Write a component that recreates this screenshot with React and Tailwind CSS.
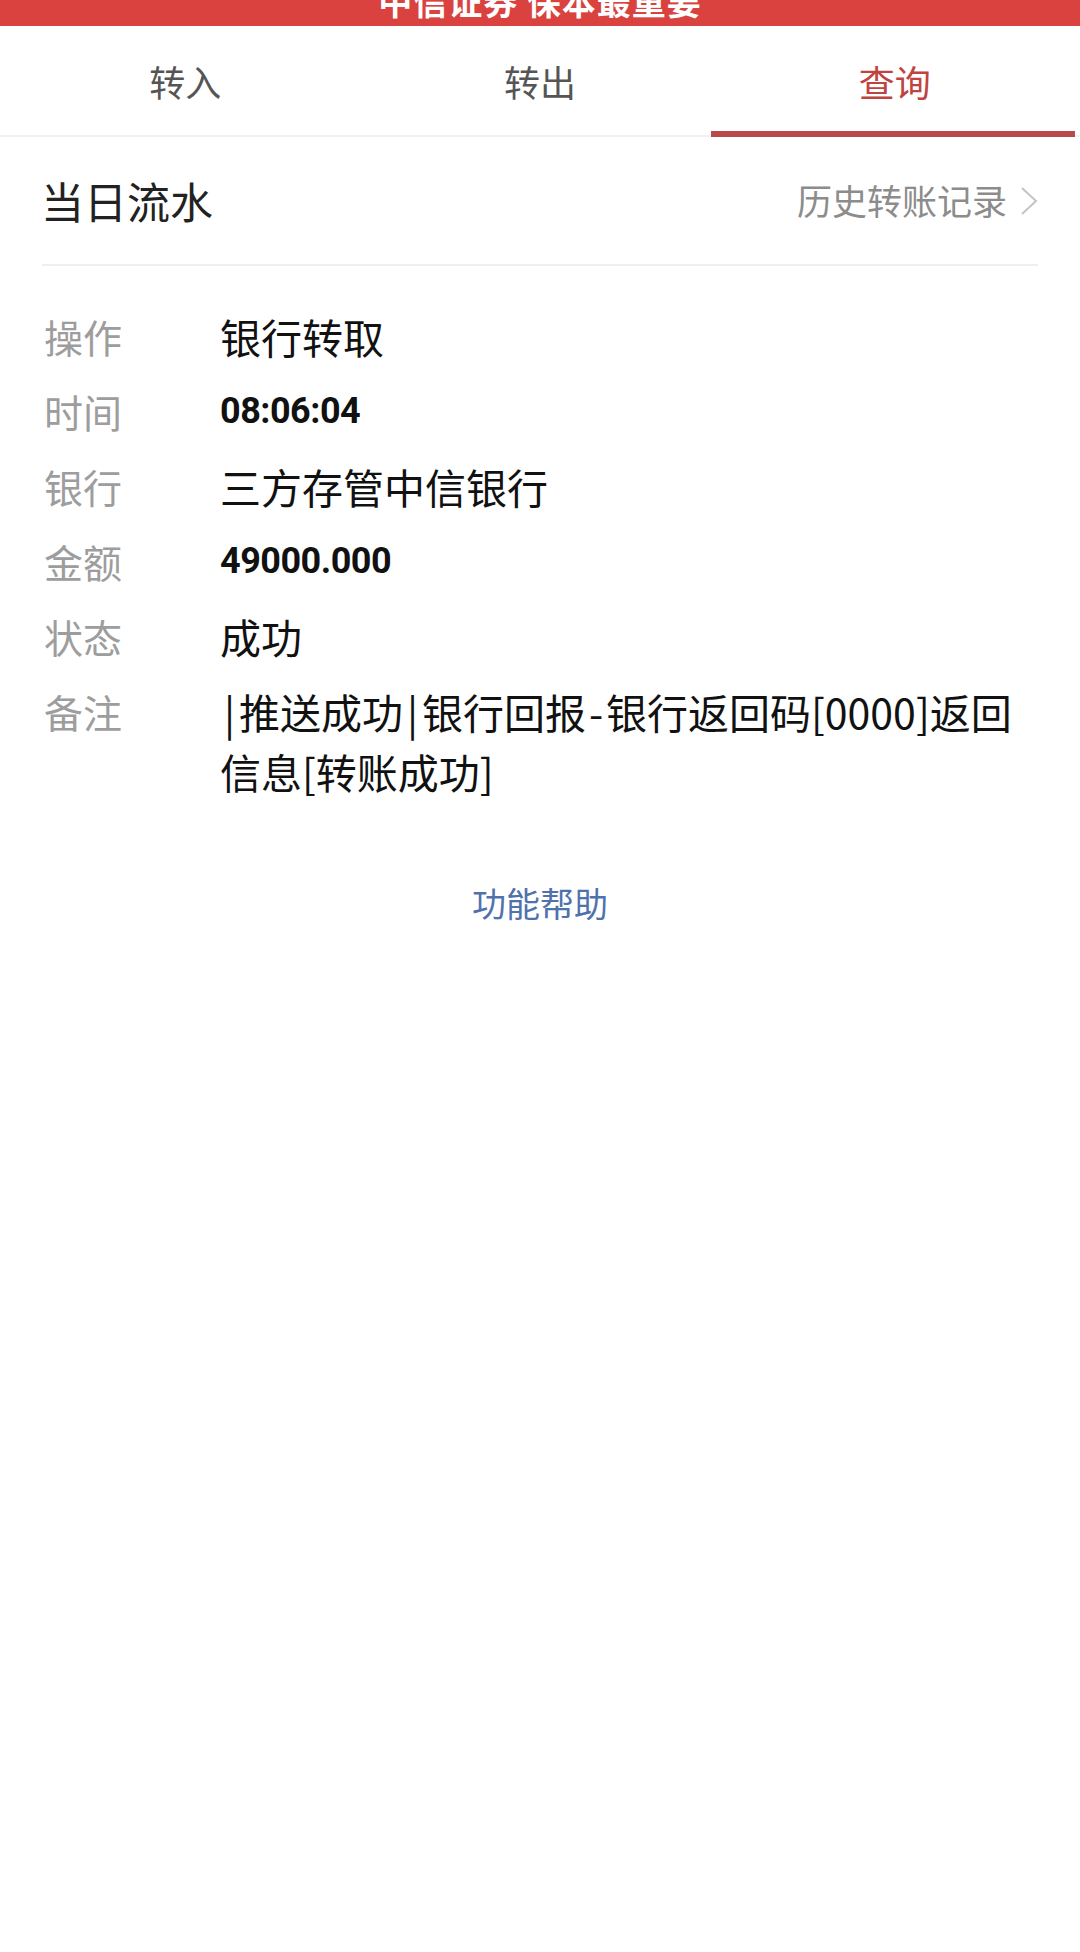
import React from "react"

const Pipe = () => <span className="inline-block w-[19px] text-center">|</span>
const Dash = () => <span className="inline-block w-[20px] text-center">-</span>

const rows = [
  { label: "操作", value: "银行转取" },
  { label: "时间", value: "08:06:04", num: true },
  { label: "银行", value: "三方存管中信银行" },
  { label: "金额", value: "49000.000", num: true },
  { label: "状态", value: "成功" },
  {
    label: "备注",
    value: (
      <>
        <Pipe />推送成功<Pipe />银行回报<Dash />银行返回码[0000]返回信息[转账成功]
      </>
    ),
  },
]

export default function App() {
  return (
    <div className="min-h-[1952px] w-[1080px] bg-white font-['Noto_Sans_CJK_SC',sans-serif]">
      {/* top banner, mostly scrolled out */}
      <div className="h-[26px] overflow-hidden bg-[#d9423f] flex justify-center items-end">
        <div className="text-white text-[34px] font-bold leading-none mb-[8px] tracking-[1px]">中信证券 保本最重要</div>
      </div>

      {/* tabs */}
      <div className="flex px-[8px] h-[111px] border-b-2 border-[#f2f2f2]">
        <div className="flex-1 flex items-center justify-center text-[36px] text-[#555]">转入</div>
        <div className="flex-1 flex items-center justify-center text-[36px] text-[#555]">转出</div>
        <div className="flex-1 relative flex items-center justify-center text-[36px] text-[#bf433f]">
          查询
          <div className="absolute left-[-6px] right-[-3px] bottom-[-2px] h-[6px] bg-[#b9494a]" />
        </div>
      </div>

      {/* header */}
      <div className="mx-[42px] h-[129px] flex items-center justify-between border-b-2 border-[#efefef]">
        <div className="text-[43px] text-[#222] -ml-[1px]">当日流水</div>
        <div className="flex items-center gap-[13px] text-[35px] text-[#8c8c8c]">
          历史转账记录
          <svg width="18" height="28" viewBox="0 0 18 28" fill="none">
            <path d="M2 1 L16 14 L2 27" stroke="#c4c4c4" strokeWidth="2" />
          </svg>
        </div>
      </div>

      {/* detail rows */}
      <div className="pl-[44px] pr-[44px] pt-[40px] flex flex-col gap-[15px]">
        {rows.map((r) => (
          <div key={r.label} className="flex">
            <div className="w-[176px] shrink-0 text-[39px] leading-[60px] text-[#9d9d9d]">{r.label}</div>
            {r.num ? (
              <div className="flex-1 font-['Roboto',sans-serif] font-bold text-[36px] leading-[60px] text-[#111] tracking-[-0.5px]">{r.value}</div>
            ) : (
              <div className="flex-1 text-[41px] leading-[60px] text-[#111]">{r.value}</div>
            )}
          </div>
        ))}
      </div>

      <div className="mt-[76px] text-center text-[34px] text-[#4f72ad]">功能帮助</div>
    </div>
  )
}
